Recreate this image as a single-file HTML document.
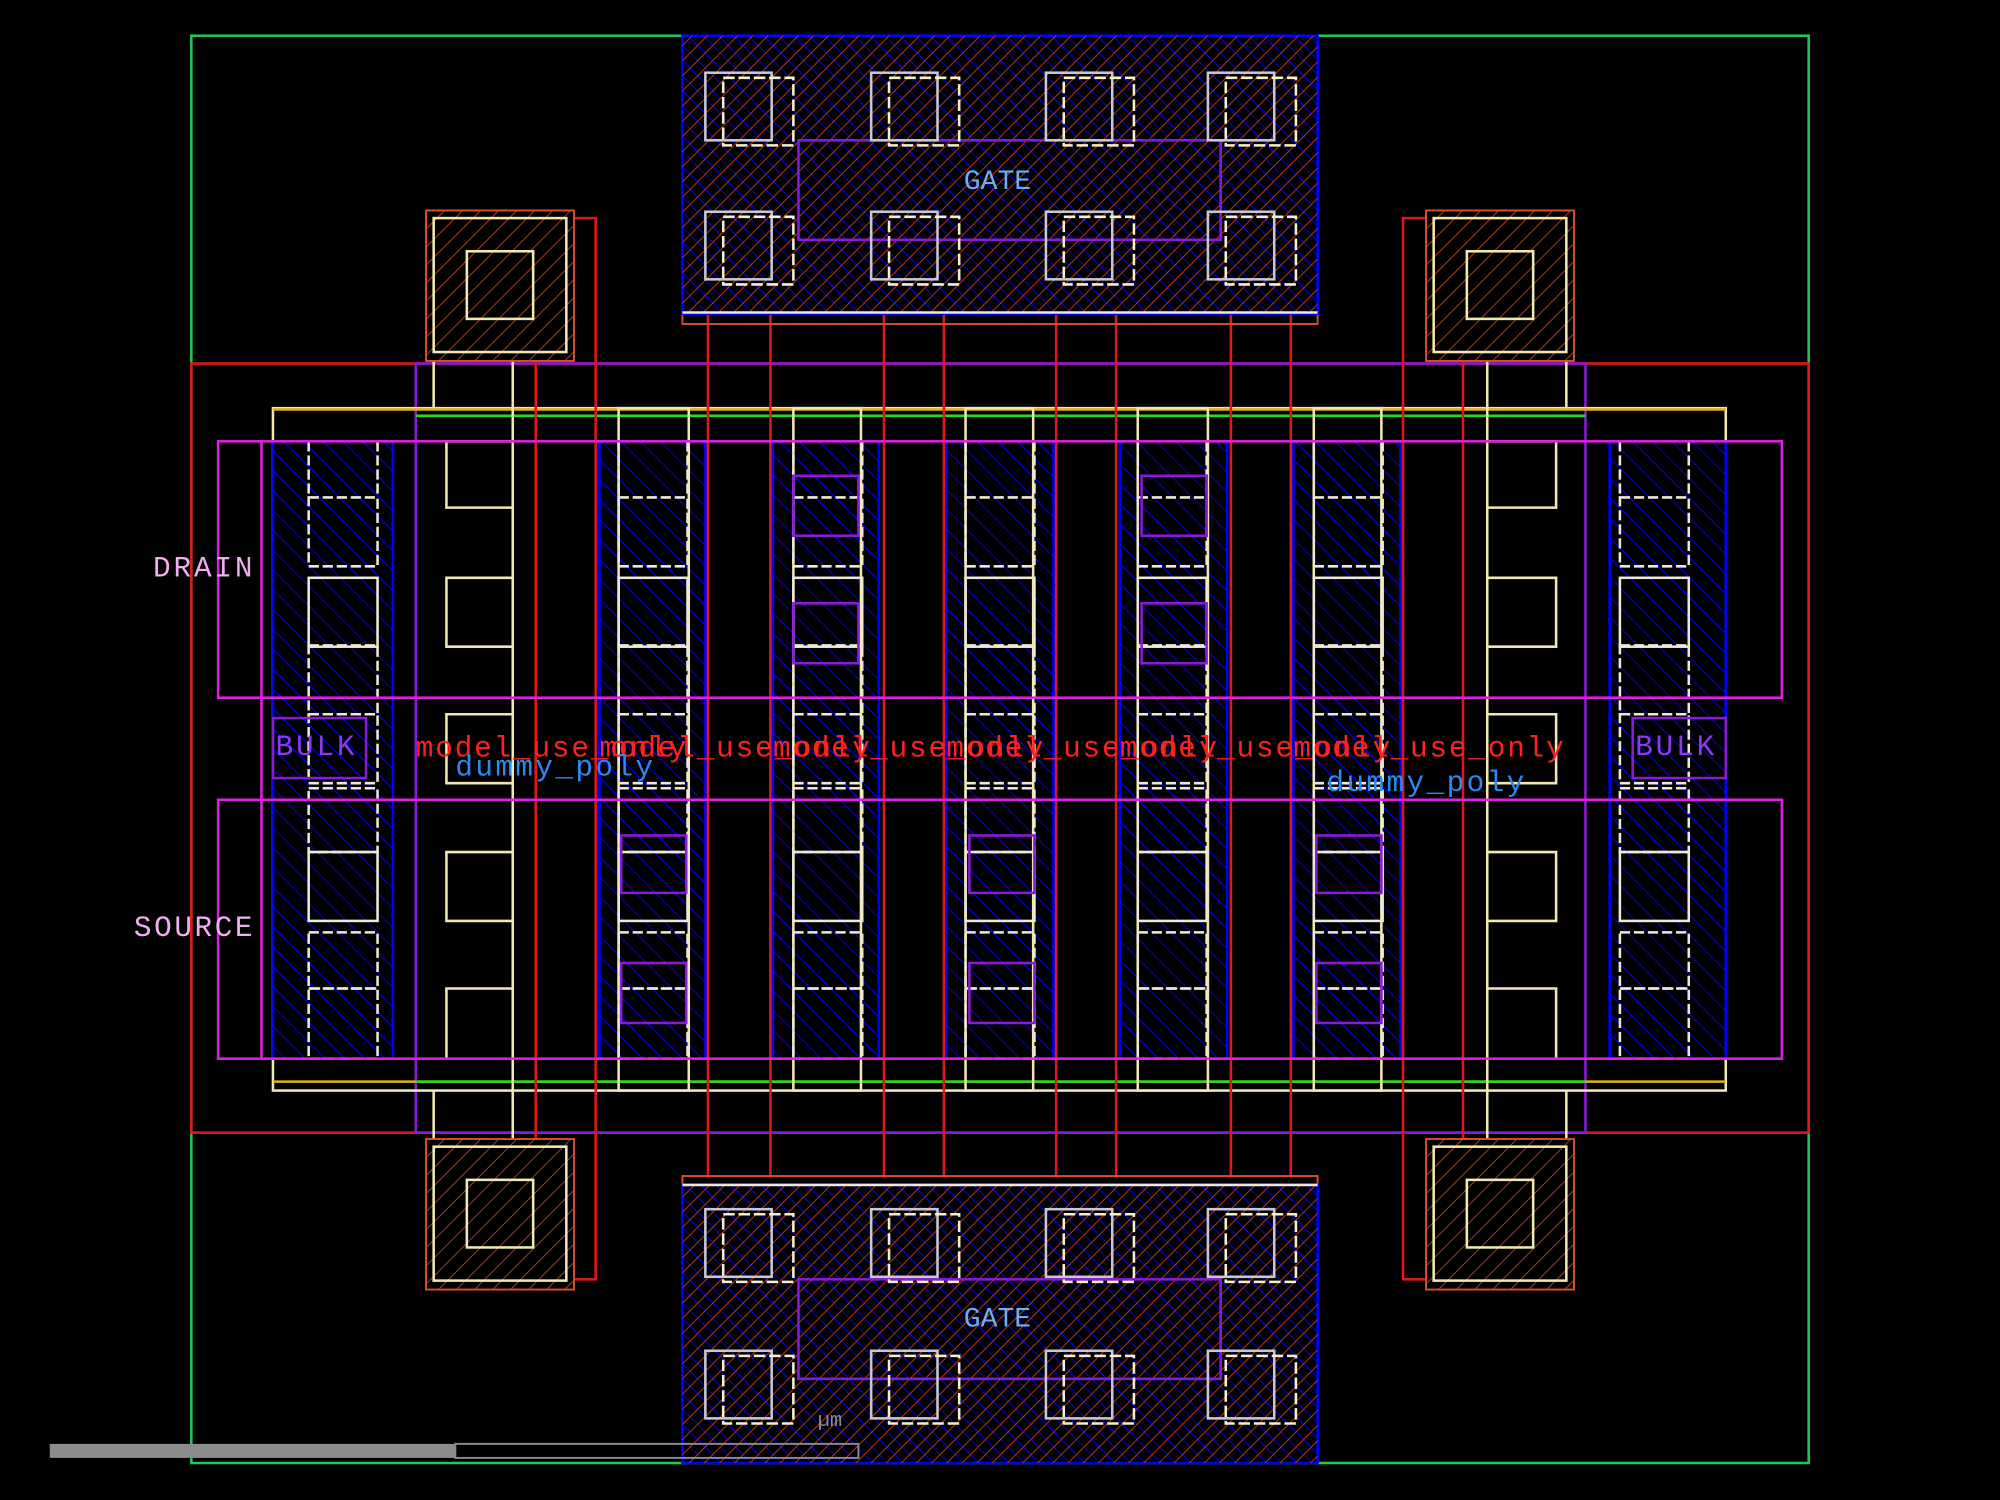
<!DOCTYPE html>
<html><head><meta charset="utf-8"><style>
html,body{margin:0;padding:0;background:#000;}
svg{display:block;}
text{font-family:"Liberation Mono","DejaVu Sans Mono",monospace;}
</style></head><body>
<svg width="2000" height="1500" viewBox="0 0 1568 1176" xmlns="http://www.w3.org/2000/svg">
<defs>
<pattern id="bh" width="11" height="11" patternUnits="userSpaceOnUse" patternTransform="rotate(-45)">
<rect width="11" height="11" fill="#000"/><line x1="0" y1="0" x2="0" y2="11" stroke="#0000ff" stroke-width="1.5"/></pattern>
<pattern id="gbh" width="8.4" height="8.4" patternUnits="userSpaceOnUse" patternTransform="rotate(-45)">
<rect width="8.4" height="8.4" fill="#000"/><line x1="0" y1="0" x2="0" y2="8.4" stroke="#0000ff" stroke-width="1.4"/></pattern>
<pattern id="rh" width="8.4" height="8.4" patternUnits="userSpaceOnUse" patternTransform="rotate(45)">
<line x1="0" y1="0" x2="0" y2="8.4" stroke="#c83c14" stroke-width="1.4"/></pattern>
<pattern id="oh" width="10" height="10" patternUnits="userSpaceOnUse" patternTransform="rotate(45)">
<rect width="10" height="10" fill="#000"/><line x1="0" y1="0" x2="0" y2="10" stroke="#c84a20" stroke-width="1.3"/></pattern>
<g id="pad">
<rect x="0" y="0" width="116" height="118" fill="url(#oh)" stroke="#d8502a" stroke-width="1.5"/>
<rect x="6" y="6" width="104" height="105" fill="none" stroke="#f0e8b0" stroke-width="2"/>
<rect x="32" y="32" width="52" height="53" fill="none" stroke="#f0e8b0" stroke-width="2"/>
</g>
<g id="gc">
<rect x="0" y="-2" width="52" height="53" fill="none" stroke="#c8c8d0" stroke-width="2"/>
<rect x="14" y="2" width="55" height="53" fill="none" stroke="#f8f0c0" stroke-width="2" stroke-dasharray="9,3"/>
</g>
<g id="fc">
<rect x="0" y="390" width="54" height="54" fill="none" stroke="#f0e8d0" stroke-width="2" stroke-dasharray="8,3"/>
<rect x="0" y="453" width="54" height="54" fill="none" stroke="#f0e8d0" stroke-width="2"/>
<rect x="0" y="506" width="54" height="54" fill="none" stroke="#f0e8d0" stroke-width="2" stroke-dasharray="8,3"/>
<rect x="0" y="560" width="54" height="54" fill="none" stroke="#f0e8d0" stroke-width="2" stroke-dasharray="8,3"/>
<rect x="0" y="618" width="54" height="50" fill="none" stroke="#f0e8d0" stroke-width="2" stroke-dasharray="8,3"/>
<rect x="0" y="668" width="54" height="54" fill="none" stroke="#f0e8d0" stroke-width="2"/>
<rect x="0" y="731" width="54" height="44" fill="none" stroke="#f0e8d0" stroke-width="2" stroke-dasharray="8,3"/>
<rect x="0" y="775" width="54" height="55" fill="none" stroke="#f0e8d0" stroke-width="2" stroke-dasharray="8,3"/>
<line x1="0" y1="346" x2="0" y2="390" stroke="#f0e8d0" stroke-width="2" stroke-dasharray="8,3"/>
<line x1="54" y1="346" x2="54" y2="390" stroke="#f0e8d0" stroke-width="2" stroke-dasharray="8,3"/>
</g>
</defs>
<rect width="1568" height="1176" fill="#000"/>
<rect x="150" y="28" width="1268" height="1119" fill="none" stroke="#1ec85a" stroke-width="2"/>
<rect x="150" y="285" width="1268" height="603" fill="none" stroke="#e01818" stroke-width="2"/>
<rect x="326" y="285" width="917" height="603" fill="none" stroke="#8a1ad8" stroke-width="2"/>
<rect x="214" y="320" width="1139" height="535" fill="none" stroke="#f0e8b0" stroke-width="2"/>
<line x1="214" y1="321" x2="1353" y2="321" stroke="#e0b020" stroke-width="2"/>
<line x1="214" y1="848" x2="1353" y2="848" stroke="#e0b020" stroke-width="2"/>
<line x1="326" y1="326" x2="1243" y2="326" stroke="#22dd22" stroke-width="2"/>
<line x1="326" y1="848" x2="1243" y2="848" stroke="#22dd22" stroke-width="2"/>
<g stroke="#0000ff" stroke-width="2">
<rect x="214" y="346" width="94" height="484" fill="url(#bh)"/>
<rect x="470" y="346" width="83" height="484" fill="url(#bh)"/>
<rect x="606" y="346" width="83" height="484" fill="url(#bh)"/>
<rect x="742" y="346" width="84" height="484" fill="url(#bh)"/>
<rect x="878" y="346" width="84" height="484" fill="url(#bh)"/>
<rect x="1014" y="346" width="84" height="484" fill="url(#bh)"/>
<rect x="1262" y="346" width="91" height="484" fill="url(#bh)"/>
</g>
<g fill="none" stroke="#f0e8b0" stroke-width="2">
<rect x="485" y="320" width="55" height="535"/>
<rect x="622" y="320" width="53" height="535"/>
<rect x="757" y="320" width="53" height="535"/>
<rect x="892" y="320" width="55" height="535"/>
<rect x="1030" y="320" width="53" height="535"/>
</g>
<use href="#fc" x="242"/><use href="#fc" x="1270"/>
<use href="#fc" x="485"/><use href="#fc" x="622"/><use href="#fc" x="757"/><use href="#fc" x="892"/><use href="#fc" x="1030"/>
<g fill="none" stroke="#8a1ad8" stroke-width="2">
<rect x="622" y="373" width="51" height="47"/><rect x="622" y="473" width="51" height="47"/>
<rect x="895" y="373" width="51" height="47"/><rect x="895" y="473" width="51" height="47"/>
<rect x="487" y="655" width="51" height="45"/><rect x="487" y="755" width="51" height="47"/>
<rect x="760" y="655" width="51" height="45"/><rect x="760" y="755" width="51" height="47"/>
<rect x="1032" y="655" width="51" height="45"/><rect x="1032" y="755" width="51" height="47"/>
</g>
<g fill="none" stroke="#f0e8b0" stroke-width="2">
<line x1="402" y1="276" x2="402" y2="893"/><line x1="340" y1="276" x2="340" y2="320"/><line x1="340" y1="855" x2="340" y2="893"/>
<line x1="1166" y1="276" x2="1166" y2="893"/><line x1="1228" y1="276" x2="1228" y2="320"/><line x1="1228" y1="855" x2="1228" y2="893"/>
<path d="M402 346H350V398H402M402 453H350V507H402M402 560H350V614H402M402 668H350V722H402M402 775H350V830"/>
<path d="M1166 346H1220V398H1166M1166 453H1220V507H1166M1166 560H1220V614H1166M1166 668H1220V722H1166M1166 775H1220V830"/>
</g>
<g stroke="#e01818" stroke-width="2" fill="none">
<line x1="555" y1="246" x2="555" y2="923"/><line x1="604" y1="246" x2="604" y2="923"/>
<line x1="693" y1="246" x2="693" y2="923"/><line x1="740" y1="246" x2="740" y2="923"/>
<line x1="828" y1="246" x2="828" y2="923"/><line x1="875" y1="246" x2="875" y2="923"/>
<line x1="965" y1="246" x2="965" y2="923"/><line x1="1012" y1="246" x2="1012" y2="923"/>
<rect x="420" y="171" width="47" height="832"/><rect x="1100" y="171" width="47" height="832"/>
</g>
<g fill="none" stroke="#e020e0" stroke-width="2">
<rect x="171" y="346" width="1226" height="201"/><rect x="171" y="627" width="1226" height="203"/>
<line x1="205" y1="346" x2="205" y2="830"/>
</g>
<use href="#pad" x="334" y="165"/><use href="#pad" x="1118" y="165"/>
<use href="#pad" x="334" y="893"/><use href="#pad" x="1118" y="893"/>
<g>
<rect x="535" y="28" width="498" height="226" fill="none" stroke="#d8502a" stroke-width="1.5"/>
<rect x="535" y="28" width="498" height="218" fill="url(#gbh)" stroke="#0000ff" stroke-width="2"/>
<rect x="535" y="28" width="498" height="218" fill="url(#rh)"/>
<line x1="535" y1="245" x2="1033" y2="245" stroke="#f0e8d0" stroke-width="2"/>
<rect x="626" y="110" width="331" height="78" fill="none" stroke="#8a1ad8" stroke-width="2"/>
<use href="#gc" x="553" y="59"/><use href="#gc" x="683" y="59"/><use href="#gc" x="820" y="59"/><use href="#gc" x="947" y="59"/>
<use href="#gc" x="553" y="168"/><use href="#gc" x="683" y="168"/><use href="#gc" x="820" y="168"/><use href="#gc" x="947" y="168"/>
<text x="782" y="148" fill="#6ab0f0" font-size="22" text-anchor="middle">GATE</text>
</g>
<g>
<rect x="535" y="922" width="498" height="225" fill="none" stroke="#d8502a" stroke-width="1.5"/>
<rect x="535" y="929" width="498" height="218" fill="url(#gbh)" stroke="#0000ff" stroke-width="2"/>
<rect x="535" y="929" width="498" height="218" fill="url(#rh)"/>
<line x1="535" y1="929" x2="1033" y2="929" stroke="#f0e8d0" stroke-width="2"/>
<rect x="626" y="1003" width="331" height="78" fill="none" stroke="#8a1ad8" stroke-width="2"/>
<use href="#gc" x="553" y="950"/><use href="#gc" x="683" y="950"/><use href="#gc" x="820" y="950"/><use href="#gc" x="947" y="950"/>
<use href="#gc" x="553" y="1061"/><use href="#gc" x="683" y="1061"/><use href="#gc" x="820" y="1061"/><use href="#gc" x="947" y="1061"/>
<text x="782" y="1040" fill="#6ab0f0" font-size="22" text-anchor="middle">GATE</text>
</g>
<text x="120" y="452" fill="#f0b0f0" font-size="23" textLength="78">DRAIN</text>
<text x="105" y="734" fill="#f0b0f0" font-size="23" textLength="93">SOURCE</text>
<rect x="214" y="563" width="73" height="47" fill="none" stroke="#8a1ad8" stroke-width="2"/>
<rect x="1280" y="563" width="73" height="47" fill="none" stroke="#8a1ad8" stroke-width="2"/>
<text x="216" y="592" fill="#8a3af0" font-size="23" textLength="62">BULK</text>
<text x="1282" y="592" fill="#8a3af0" font-size="23" textLength="62">BULK</text>
<g fill="#ff2020" font-size="23">
<text x="326" y="593" textLength="212">model_use_only</text><text x="470" y="593" textLength="212">model_use_only</text>
<text x="606" y="593" textLength="212">model_use_only</text><text x="742" y="593" textLength="212">model_use_only</text>
<text x="878" y="593" textLength="212">model_use_only</text><text x="1014" y="593" textLength="212">model_use_only</text>
</g>
<text x="357" y="608" fill="#2a8af0" font-size="23" textLength="155">dummy_poly</text>
<text x="1040" y="620" fill="#2a8af0" font-size="23" textLength="155">dummy_poly</text>
<rect x="39" y="1132" width="318" height="11" fill="#8c8c8c"/>
<rect x="357" y="1132" width="316" height="11" fill="none" stroke="#8c8c8c" stroke-width="1.5"/>
<text x="641" y="1118" fill="#8c8c8c" font-size="16">µm</text>
</svg>
</body></html>
